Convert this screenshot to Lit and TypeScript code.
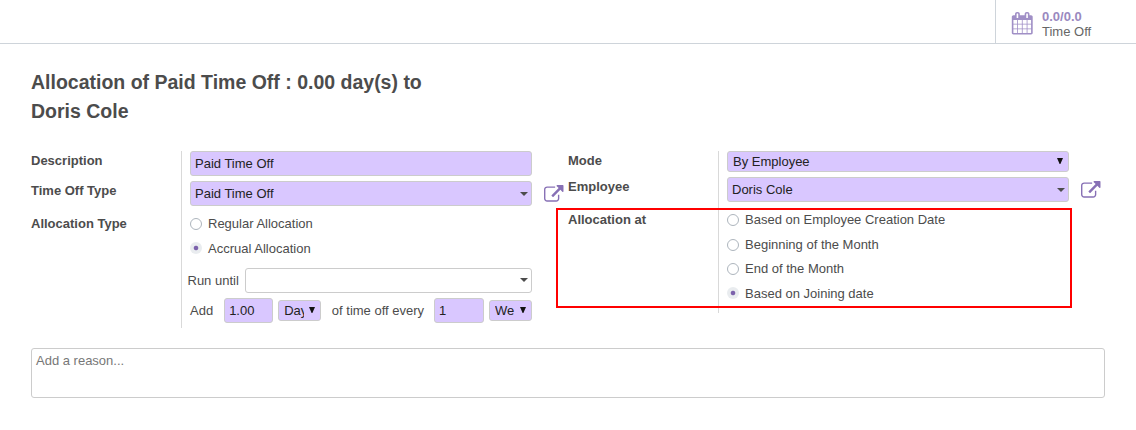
import { LitElement, html, css } from "lit";
import { customElement } from "lit/decorators.js";

const calendarIcon = html`<svg class="calendar" viewBox="0 0 1792 1792"><path d="M192 1664h288v-288h-288v288zm352 0h320v-288h-320v288zm-352-352h288v-320h-288v320zm352 0h320v-320h-320v320zm-352-384h288v-288h-288v288zm736 736h320v-288h-320v288zm-384-736h320v-288h-320v288zm768 736h288v-288h-288v288zm-384-352h320v-320h-320v320zm-352-864v-288q0-13-9.5-22.5t-22.5-9.5h-64q-13 0-22.5 9.5t-9.5 22.5v288q0 13 9.5 22.5t22.5 9.5h64q13 0 22.5-9.5t9.5-22.5zm736 864h288v-320h-288v320zm-384-384h320v-288h-320v288zm384 0h288v-288h-288v288zm32-480v-288q0-13-9.5-22.5t-22.5-9.5h-64q-13 0-22.5 9.5t-9.5 22.5v288q0 13 9.5 22.5t22.5 9.5h64q13 0 22.5-9.5t9.5-22.5zm384-64v1280q0 52-38 90t-90 38h-1408q-52 0-90-38t-38-90v-1280q0-52 38-90t90-38h128v-96q0-66 47-113t113-47h64q66 0 113 47t47 113v96h384v-96q0-66 47-113t113-47h64q66 0 113 47t47 113v96h128q52 0 90 38t38 90z"/></svg>`;

const linkIcon = html`<svg class="link" viewBox="0 0 1792 1536"><path d="M1408 928v320q0 119-84.5 203.5t-203.5 84.5h-832q-119 0-203.5-84.5t-84.5-203.5v-832q0-119 84.5-203.5t203.5-84.5h704q14 0 23 9t9 23v64q0 14-9 23t-23 9h-704q-66 0-113 47t-47 113v832q0 66 47 113t113 47h832q66 0 113-47t47-113v-320q0-14 9-23t23-9h64q14 0 23 9t9 23zm384-864v512q0 26-19 45t-45 19-45-19l-176-176-652 652q-10 10-23 10t-23-10l-114-114q-10-10-10-23t10-23l652-652-176-176q-19-19-19-45t19-45 45-19h512q26 0 45 19t19 45z"/></svg>`;

const caret = html`<svg class="caret" viewBox="0 0 8 4"><path d="M0 0h8l-4 4z"/></svg>`;
const arrow = html`<svg class="arrow" viewBox="0 0 6 6"><path d="M0 0h6l-2.6 6h-.8z"/></svg>`;

const radio = (label: string, checked = false) => html`
  <div class="radio"><span class="dot ${checked ? "on" : ""}"></span><span>${label}</span></div>
`;

@customElement("app-root")
export class AppRoot extends LitElement {
  static styles = css`
    :host {
      display: block;
      height: 430px;
      overflow: hidden;
      background: #fff;
      color: #4c4c4c;
      font: 13px/20px "Liberation Sans", Arial, sans-serif;
    }
    * { box-sizing: border-box; }
    svg { display: block; flex: none; overflow: visible; }
    .bar {
      display: flex;
      justify-content: flex-end;
      height: 44px;
      border-bottom: 1px solid #ced4da;
    }
    .stat {
      display: flex;
      width: 141px;
      padding: 9px 0 0 15px;
      border-left: 1px solid #ced4da;
      line-height: 15px;
      color: #666;
    }
    .stat b { display: block; color: #9a89bf; }
    .calendar { width: 22.5px; height: 22.5px; margin: 3px 8.5px 0 0; fill: #a08fc6; }
    h1 {
      width: 420px;
      margin: 24px 0 0 31px;
      font-size: 19.5px;
      line-height: 29.25px;
    }
    .groups {
      display: flex;
      gap: 5px;
      padding: 24.5px 0 0 31px;
      height: 221.5px;
      align-items: flex-start;
    }
    .group {
      position: relative;
      display: grid;
      grid-template-columns: 150px 382px;
    }
    .labels { display: flex; flex-direction: column; font-weight: bold; }
    .left .labels { gap: 10px; }
    .left .labels :last-child { margin-top: 3px; }
    .right .labels { gap: 6px; }
    .right .labels :last-child { margin-top: 7px; }
    .fields { padding-left: 8px; border-left: 1px solid #d9d9d9; }
    .left .fields { height: 177px; }
    .right .fields { height: 162px; }
    .row { display: flex; align-items: center; }
    .box {
      display: flex;
      flex: none;
      align-items: center;
      justify-content: space-between;
      width: 342px;
      height: 25px;
      padding: 0 4px;
      border: 1px solid #ccc;
      border-radius: 3px;
      background: #d9c7ff;
      color: #222;
      white-space: nowrap;
    }
    .caret { width: 8px; height: 4px; margin-right: -1px; fill: #4c4c4c; }
    .arrow { width: 6px; height: 6px; margin-bottom: 2px; fill: #111; }
    .select { height: 21px; padding: 0 5px; }
    .link { width: 19.5px; height: 16.7px; margin: -1px 0 0 12px; fill: #8770b5; }
    .gap { margin-top: 5px; }
    .radios { display: flex; flex-direction: column; gap: 4.6px; margin-top: 8px; }
    .radio { display: flex; align-items: center; gap: 6px; height: 20px; }
    .dot {
      width: 12px;
      height: 12px;
      border: 1px solid #adb5bd;
      border-radius: 50%;
    }
    .dot.on {
      margin-top: -1px;
      border: none;
      background: radial-gradient(circle, #7c62ac 1.9px, #e9ecef 2.7px);
    }
    .until { margin: 9.4px 0 0 -2.5px; }
    .until .box { width: 287px; margin-left: 6px; background: #fff; }
    .every { width: 342px; }
    .every > span, .until > span { padding-top: 1px; }
    .number { width: 50px; margin: 0 5px 0 auto; padding-top: 1px; }
    .first { width: 49px; margin-left: 11px; }
    .unit { width: 43px; padding: 1px 5px 0; }
    .first + .unit { margin-right: 10.7px; }
    .unit .arrow { margin-bottom: 1px; }
    .clip { width: 20px; overflow: hidden; }
    .highlight {
      position: absolute;
      left: -12px;
      top: 57px;
      width: 516px;
      height: 100px;
      border: 2px solid #f00;
    }
    .reason {
      width: 1074px;
      height: 50px;
      margin-left: 31px;
      padding: 2px 4px;
      border: 1px solid #ccc;
      border-radius: 3px;
      color: #777;
    }
  `;

  render() {
    return html`
      <header class="bar">
        <div class="stat">${calendarIcon}<div><b>0.0/0.0</b>Time Off</div></div>
      </header>
      <h1>Allocation of Paid Time Off : 0.00 day(s) to Doris Cole</h1>
      <div class="groups">
        <section class="group left">
          <div class="labels"><span>Description</span><span>Time Off Type</span><span>Allocation Type</span></div>
          <div class="fields">
            <div class="box">Paid Time Off</div>
            <div class="row gap"><div class="box">Paid Time Off${caret}</div>${linkIcon}</div>
            <div class="radios">${radio("Regular Allocation")}${radio("Accrual Allocation", true)}</div>
            <div class="row until"><span>Run until</span><div class="box"><span></span>${caret}</div></div>
            <div class="row gap every">
              <span>Add</span>
              <div class="box number first">1.00</div>
              <div class="box select unit"><span class="clip">Day</span>${arrow}</div>
              <span>of time off every</span>
              <div class="box number">1</div>
              <div class="box select unit"><span class="clip">We</span>${arrow}</div>
            </div>
          </div>
        </section>
        <section class="group right">
          <div class="labels"><span>Mode</span><span>Employee</span><span>Allocation at</span></div>
          <div class="fields">
            <div class="box select">By Employee${arrow}</div>
            <div class="row gap"><div class="box">Doris Cole${caret}</div>${linkIcon}</div>
            <div class="radios">
              ${radio("Based on Employee Creation Date")}${radio("Beginning of the Month")}
              ${radio("End of the Month")}${radio("Based on Joining date", true)}
            </div>
          </div>
          <div class="highlight"></div>
        </section>
      </div>
      <div class="reason">Add a reason...</div>
    `;
  }
}
